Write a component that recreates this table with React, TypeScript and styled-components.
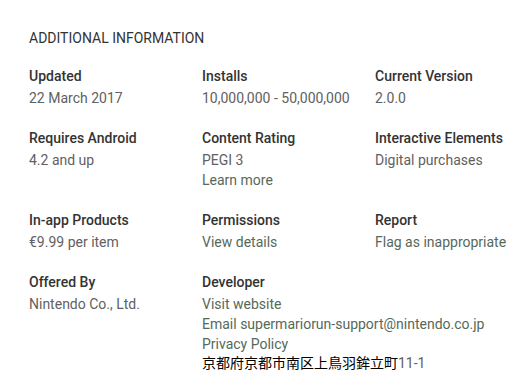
import styled, { createGlobalStyle } from "styled-components";

const GlobalStyle = createGlobalStyle`
  body {
    margin: 0;
    background: #fff;
    font-family: Roboto, "Noto Sans CJK JP", sans-serif;
  }
`;

const Section = styled.section`
  padding: 28px 20px 0 29px;
`;

const Title = styled.h2`
  margin: 0 0 16px;
  font-size: 14px;
  line-height: 20px;
  font-weight: 400;
  color: #333;
  text-transform: uppercase;
`;

const Grid = styled.div`
  display: grid;
  grid-template-columns: 173px 173px 1fr;
  row-gap: 18px;
`;

const Item = styled.div`
  display: flex;
  flex-direction: column;
`;

const Label = styled.div`
  font-size: 14px;
  line-height: 24px;
  font-weight: 500;
  color: #333;
`;

const Value = styled.div<{ $link?: boolean }>`
  font-size: 14px;
  line-height: 20px;
  color: ${(p) => (p.$link ? "#55695a" : "#616161")};
  white-space: nowrap;
`;

const Address = styled(Value)`
  color: #000;
  line-height: 18px;
`;

const Number = styled.span`
  color: #616161;
`;

type Line = { text: string; link?: boolean };

const items: { label: string; lines: Line[] }[] = [
  { label: "Updated", lines: [{ text: "22 March 2017" }] },
  { label: "Installs", lines: [{ text: "10,000,000 - 50,000,000" }] },
  { label: "Current Version", lines: [{ text: "2.0.0" }] },
  { label: "Requires Android", lines: [{ text: "4.2 and up" }] },
  {
    label: "Content Rating",
    lines: [{ text: "PEGI 3" }, { text: "Learn more", link: true }],
  },
  { label: "Interactive Elements", lines: [{ text: "Digital purchases" }] },
  { label: "In-app Products", lines: [{ text: "€9.99 per item" }] },
  { label: "Permissions", lines: [{ text: "View details", link: true }] },
  { label: "Report", lines: [{ text: "Flag as inappropriate", link: true }] },
  { label: "Offered By", lines: [{ text: "Nintendo Co., Ltd." }] },
];

export default function App() {
  return (
    <>
      <GlobalStyle />
      <Section>
        <Title>Additional Information</Title>
        <Grid>
          {items.map((item) => (
            <Item key={item.label}>
              <Label>{item.label}</Label>
              {item.lines.map((line) => (
                <Value key={line.text} $link={line.link}>
                  {line.text}
                </Value>
              ))}
            </Item>
          ))}
          <Item>
            <Label>Developer</Label>
            <Value $link>Visit website</Value>
            <Value $link>Email supermariorun-support@nintendo.co.jp</Value>
            <Value $link>Privacy Policy</Value>
            <Address>
              京都府京都市南区上鳥羽鉾立町<Number>11-1</Number>
            </Address>
          </Item>
        </Grid>
      </Section>
    </>
  );
}
